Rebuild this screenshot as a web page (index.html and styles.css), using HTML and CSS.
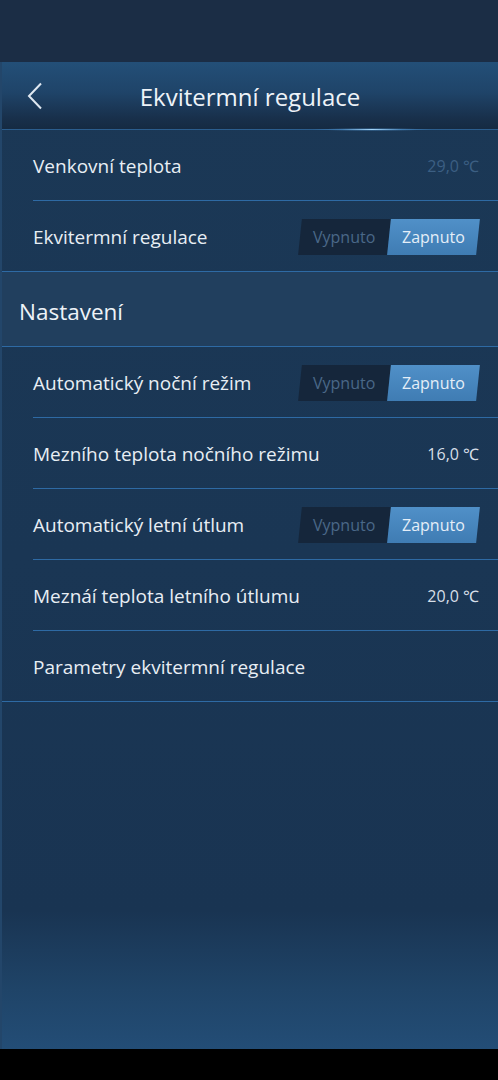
FILE: index.html
```html
<!DOCTYPE html>
<html lang="cs">
<head>
<meta charset="utf-8">
<link rel="stylesheet" href="styles.css">
</head>
<body>
<div class="status"></div>
<div class="app">
  <header class="header">
    <button class="back" aria-label="Zpět">
      <svg width="16" height="28" viewBox="0 0 16 28"><path d="M14 1.5 L2 14 L14 26.5" fill="none" stroke="#dfe8f1" stroke-width="2"/></svg>
    </button>
    <h1 class="title">Ekvitermní regulace</h1>
    <div class="glow"></div>
  </header>
  <div class="list">
    <div class="row inset"><span class="label">Venkovní teplota</span><span class="value dim">29,0 ℃</span></div>
    <div class="row full"><span class="label">Ekvitermní regulace</span>
      <div class="toggle"><span class="off"><i>Vypnuto</i></span><span class="on"><i>Zapnuto</i></span></div></div>
    <div class="section">Nastavení</div>
    <div class="row inset"><span class="label">Automatický noční režim</span>
      <div class="toggle"><span class="off"><i>Vypnuto</i></span><span class="on"><i>Zapnuto</i></span></div></div>
    <div class="row inset"><span class="label">Mezního teplota nočního režimu</span><span class="value">16,0 ℃</span></div>
    <div class="row inset"><span class="label">Automatický letní útlum</span>
      <div class="toggle"><span class="off"><i>Vypnuto</i></span><span class="on"><i>Zapnuto</i></span></div></div>
    <div class="row inset"><span class="label">Meznáí teplota letního útlumu</span><span class="value">20,0 ℃</span></div>
    <div class="row full"><span class="label">Parametry ekvitermní regulace</span></div>
  </div>
</div>
<div class="bottom"></div>
</body>
</html>
```
FILE: styles.css
```css
html, body { margin: 0; padding: 0; }
body {
  width: 498px;
  height: 1080px;
  background: #1b2d45;
  font-family: "Open Sans", "Noto Sans", sans-serif;
  color: #e8eef4;
  overflow: hidden;
}
.status { height: 62px; background: #1b2d45; }
.app {
  height: 987px;
  display: flex;
  flex-direction: column;
  border-left: 2px solid #23466a;
  box-sizing: border-box;
  background: linear-gradient(to bottom, #1b3856 0%, #1a3654 50%, #193452 86%, #1f4468 94%, #234d76 100%);
}
.header {
  position: relative;
  height: 67px;
  flex-shrink: 0;
  display: flex;
  align-items: center;
  justify-content: center;
  background: linear-gradient(to bottom, #234f78 0%, #1f4469 45%, #182f4a 85%, #152a42 100%);
  border-bottom: 1px solid #2b5d8d;
}
.back {
  position: absolute;
  left: 25px;
  top: 20px;
  background: none;
  border: 0;
  padding: 0;
  width: 16px;
  height: 28px;
}
.title {
  margin: 0;
  padding-top: 1px;
  font-size: 24px;
  font-weight: 500;
  color: #eef3f8;
}
.glow {
  position: absolute;
  left: 310px;
  bottom: -2px;
  width: 120px;
  height: 3px;
  background: radial-gradient(ellipse at center, rgba(170,220,255,0.95) 0%, rgba(90,160,220,0.45) 35%, rgba(60,120,180,0) 70%);
}
.list { display: flex; flex-direction: column; }
.row {
  height: 71px;
  display: flex;
  align-items: center;
  justify-content: space-between;
  padding: 1px 19px 0 31px;
  box-sizing: border-box;
  position: relative;
  flex-shrink: 0;
}
.row.short { height: 70px; }
.row.inset::after {
  content: "";
  position: absolute;
  left: 31px; right: 0; bottom: 0;
  height: 1px;
  background: #2e6aa4;
}
.row.full { border-bottom: 1px solid #2e6aa4; }
.label { font-size: 19px; color: #e8eef4; }
.value { font-size: 16px; color: #d6dee7; }
.value.dim { color: #3c5f83; }
.section {
  height: 75px;
  flex-shrink: 0;
  display: flex;
  align-items: center;
  padding: 4px 0 0 17px;
  box-sizing: border-box;
  font-size: 22.5px;
  color: #eef3f8;
  background: #213f5e;
  border-bottom: 1px solid #2e6aa4;
}
.toggle {
  display: flex;
  height: 36px;
  width: 178px;
  transform: skewX(-6deg);
  margin-right: 1px;
}
.toggle span {
  flex: 1;
  display: flex;
  align-items: center;
  justify-content: center;
}
.toggle i {
  font-style: normal;
  font-size: 16px;
  transform: skewX(6deg);
}
.toggle .off { background: #15263b; color: #4a6888; }
.toggle .on { background: linear-gradient(to bottom, #5090c8, #3f7cb3); color: #e4eef8; }
.bottom { height: 31px; background: #000; }
```
